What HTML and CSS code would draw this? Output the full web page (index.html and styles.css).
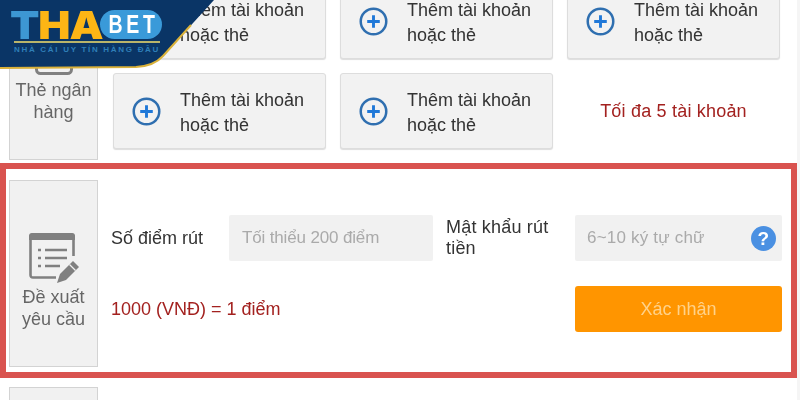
FILE: index.html
```html
<!DOCTYPE html>
<html lang="vi">
<head>
  <meta charset="UTF-8">
  <title>Rút tiền</title>
  <link rel="stylesheet" href="styles.css">
</head>
<body>
  <div class="logo">
    <svg class="logo-bg" viewBox="0 0 222 70">
      <path d="M0 0H214L163 56Q154 66 136 67L0 68Z" fill="#0a3566"/>
      <path d="M191 25L163 56Q154 66 136 67L0 68" fill="none" stroke="#d9b13a" stroke-width="2"/>
    </svg>
    <div class="logo-top">
      <div class="logo-tha"><span class="logo-t">T</span><span class="logo-ha">HA</span></div>
      <div class="logo-bet"><span>BET</span></div>
    </div>
    <div class="logo-line">NHÀ CÁI UY TÍN HÀNG ĐẦU</div>
  </div>

  <div class="page">
    <section class="row row-bank">
      <div class="side">
        <svg class="side-icon card-icon" viewBox="0 0 38 30"><rect x="1.5" y="-5" width="35" height="33.5" rx="4" fill="none" stroke="#808080" stroke-width="3"/></svg>
        <div>Thẻ ngân<br>hàng</div>
      </div>
      <div class="cards">
        <a class="card"><svg class="plus" viewBox="0 0 30 30"><circle cx="15" cy="15" r="13.2" fill="none" stroke="#2f6fb0" stroke-width="2.6"/><path d="M15 8.5v13M8.5 15h13" stroke="#1f78d8" stroke-width="3"/></svg><span>Thêm tài khoản<br>hoặc thẻ</span></a>
        <a class="card"><svg class="plus" viewBox="0 0 30 30"><circle cx="15" cy="15" r="13.2" fill="none" stroke="#2f6fb0" stroke-width="2.6"/><path d="M15 8.5v13M8.5 15h13" stroke="#1f78d8" stroke-width="3"/></svg><span>Thêm tài khoản<br>hoặc thẻ</span></a>
        <a class="card"><svg class="plus" viewBox="0 0 30 30"><circle cx="15" cy="15" r="13.2" fill="none" stroke="#2f6fb0" stroke-width="2.6"/><path d="M15 8.5v13M8.5 15h13" stroke="#1f78d8" stroke-width="3"/></svg><span>Thêm tài khoản<br>hoặc thẻ</span></a>
        <a class="card"><svg class="plus" viewBox="0 0 30 30"><circle cx="15" cy="15" r="13.2" fill="none" stroke="#2f6fb0" stroke-width="2.6"/><path d="M15 8.5v13M8.5 15h13" stroke="#1f78d8" stroke-width="3"/></svg><span>Thêm tài khoản<br>hoặc thẻ</span></a>
        <a class="card"><svg class="plus" viewBox="0 0 30 30"><circle cx="15" cy="15" r="13.2" fill="none" stroke="#2f6fb0" stroke-width="2.6"/><path d="M15 8.5v13M8.5 15h13" stroke="#1f78d8" stroke-width="3"/></svg><span>Thêm tài khoản<br>hoặc thẻ</span></a>
        <div class="limit">Tối đa 5 tài khoản</div>
      </div>
    </section>

    <section class="request">
      <div class="side side-request">
        <svg class="side-icon" viewBox="0 0 50 50">
          <path d="M27 44.5H4Q1.5 44.5 1.5 42V4Q1.5 1.5 4 1.5H42Q44.5 1.5 44.5 4V23" fill="none" stroke="#808080" stroke-width="2.6"/>
          <path d="M3 0H43Q46 0 46 3V7H0V3Q0 0 3 0Z" fill="#808080"/>
          <path d="M9 17h3M16 17h22M9 25h3M16 25h22M9 33h3M16 33h15" stroke="#808080" stroke-width="2.4"/>
          <path d="M28 50L31 41L44 28L50 34L37 47Z" fill="#808080"/>
          <path d="M40.5 31.500L46.500 37.500" stroke="#f1f1f1" stroke-width="1.2"/>
        </svg>
        <div>Đề xuất<br>yêu cầu</div>
      </div>
      <div class="form">
        <div class="form-row">
          <label class="label label-points">Số điểm rút</label>
          <div class="input input-points">Tối thiểu 200 điểm</div>
          <label class="label label-pass">Mật khẩu rút tiền</label>
          <div class="input input-pass">
            <span>6~10 ký tự chữ</span>
            <span class="help">?</span>
          </div>
        </div>
        <div class="form-row form-row-2">
          <div class="rate">1000 (VNĐ) = 1 điểm</div>
          <button class="submit">Xác nhận</button>
        </div>
      </div>
    </section>

    <section class="row row-next">
      <div class="side"></div>
    </section>
  </div>
</body>
</html>
```

FILE: styles.css
```css
html, body {
  margin: 0;
  padding: 0;
  height: 400px;
  overflow: hidden;
}

body {
  font-family: "Liberation Sans", Arial, sans-serif;
  font-size: 18px;
  color: #333;
  background: #f5f5f5;
}

.page {
  width: 797px;
  height: 417px;
  margin-top: -17px;
  background: #fff;
  filter: blur(0.5px);
}

.row {
  display: flex;
  padding: 0 0 0 9px;
}

.side {
  box-sizing: border-box;
  width: 89px;
  flex: none;
  background: #f1f1f1;
  border: 1px solid #d3d3d3;
  text-align: center;
  color: #666;
  line-height: 22px;
  display: flex;
  flex-direction: column;
  align-items: center;
}

.row-bank .side {
  height: 177px;
  justify-content: flex-end;
  padding-bottom: 36px;
}

.side-icon {
  width: 50px;
  height: 50px;
}

.side .card-icon {
  width: 38px;
  height: 30px;
  margin-bottom: 4px;
}

.cards {
  display: grid;
  grid-template-columns: repeat(3, 213px);
  grid-auto-rows: 76px;
  gap: 14px;
  margin-left: 15px;
}

.card {
  display: flex;
  align-items: center;
  background: #f2f2f2;
  border: 1px solid #ddd;
  border-radius: 3px;
  box-shadow: 0 1px 1px #ddd;
  line-height: 25px;
  color: #333;
}

.card span {
  padding-top: 4px;
}

.plus {
  width: 29px;
  height: 29px;
  margin-left: 18px;
  margin-right: 19px;
  flex: none;
}

.limit {
  color: #a3211f;
  text-align: center;
  line-height: 76px;
  letter-spacing: 0.2px;
}

.request {
  box-sizing: border-box;
  display: flex;
  width: 797px;
  height: 215px;
  margin-top: 3px;
  border: 6px solid #d9534f;
  padding: 11px 0 5px 3px;
}

.side-request {
  height: 187px;
  padding-top: 52px;
}

.side-request .side-icon {
  margin-bottom: 3px;
}

.form {
  margin-left: 13px;
}

.form-row {
  display: flex;
  align-items: center;
  height: 46px;
  margin-top: 35px;
}

.form-row-2 {
  justify-content: space-between;
  margin-top: 25px;
}

.label {
  color: #333;
  line-height: 21px;
}

.label-points {
  width: 118px;
}

.label-pass {
  width: 129px;
  letter-spacing: 0.2px;
}

.input {
  box-sizing: border-box;
  display: flex;
  align-items: center;
  justify-content: space-between;
  height: 46px;
  background: #f1f1f1;
  border-radius: 2px;
  color: #aaa;
  font-size: 17px;
  padding: 0 6px 0 13px;
}

.input-points {
  width: 204px;
  margin-right: 13px;
  letter-spacing: -0.15px;
}

.input-pass {
  width: 207px;
  padding-left: 12px;
  letter-spacing: 0.2px;
}

.help {
  width: 25px;
  height: 25px;
  border-radius: 50%;
  background: #4a90e2;
  color: #fff;
  font-weight: bold;
  font-size: 19px;
  line-height: 25px;
  text-align: center;
}

.rate {
  color: #a3211f;
}

.submit {
  width: 207px;
  height: 46px;
  border: 0;
  border-radius: 3px;
  background: #ff9500;
  color: #ffd28a;
  font: inherit;
}

.row-next {
  margin-top: 9px;
}

.row-next .side {
  height: 40px;
}

/* logo sobre a pagina */
.logo {
  position: absolute;
  left: 0;
  top: 0;
  width: 222px;
  height: 70px;
  z-index: 10;
}

.logo-bg {
  position: absolute;
  left: 0;
  top: 0;
  width: 222px;
  height: 70px;
}

.logo-top {
  position: absolute;
  left: 10px;
  top: 10px;
  display: flex;
}

.logo-tha {
  width: 88px;
  font-family: Inter, "Liberation Sans", sans-serif;
  font-weight: 900;
  font-size: 39px;
  line-height: 29px;
  letter-spacing: -1px;
  transform: scaleX(1.1);
  transform-origin: left center;
  white-space: nowrap;
}

.logo-t {
  color: #3d97d3;
}

.logo-ha {
  color: #fdb515;
}

.logo-bet {
  width: 62px;
  height: 29px;
  margin-left: 2px;
  border-radius: 15px;
  background: #3a9ad9;
  color: #fff;
  font-weight: bold;
  font-size: 26px;
  line-height: 29px;
  letter-spacing: 5px;
  text-align: center;
}

.logo-bet span {
  display: inline-block;
  transform: scaleX(0.75);
}

.logo-line {
  position: absolute;
  left: 14px;
  top: 41px;
  width: 146px;
  border-top: 2px solid #b9b46a;
  padding-top: 1px;
  color: #2f7fb8;
  font-size: 8px;
  font-weight: bold;
  letter-spacing: 1.7px;
  line-height: 12px;
  white-space: nowrap;
}
```
